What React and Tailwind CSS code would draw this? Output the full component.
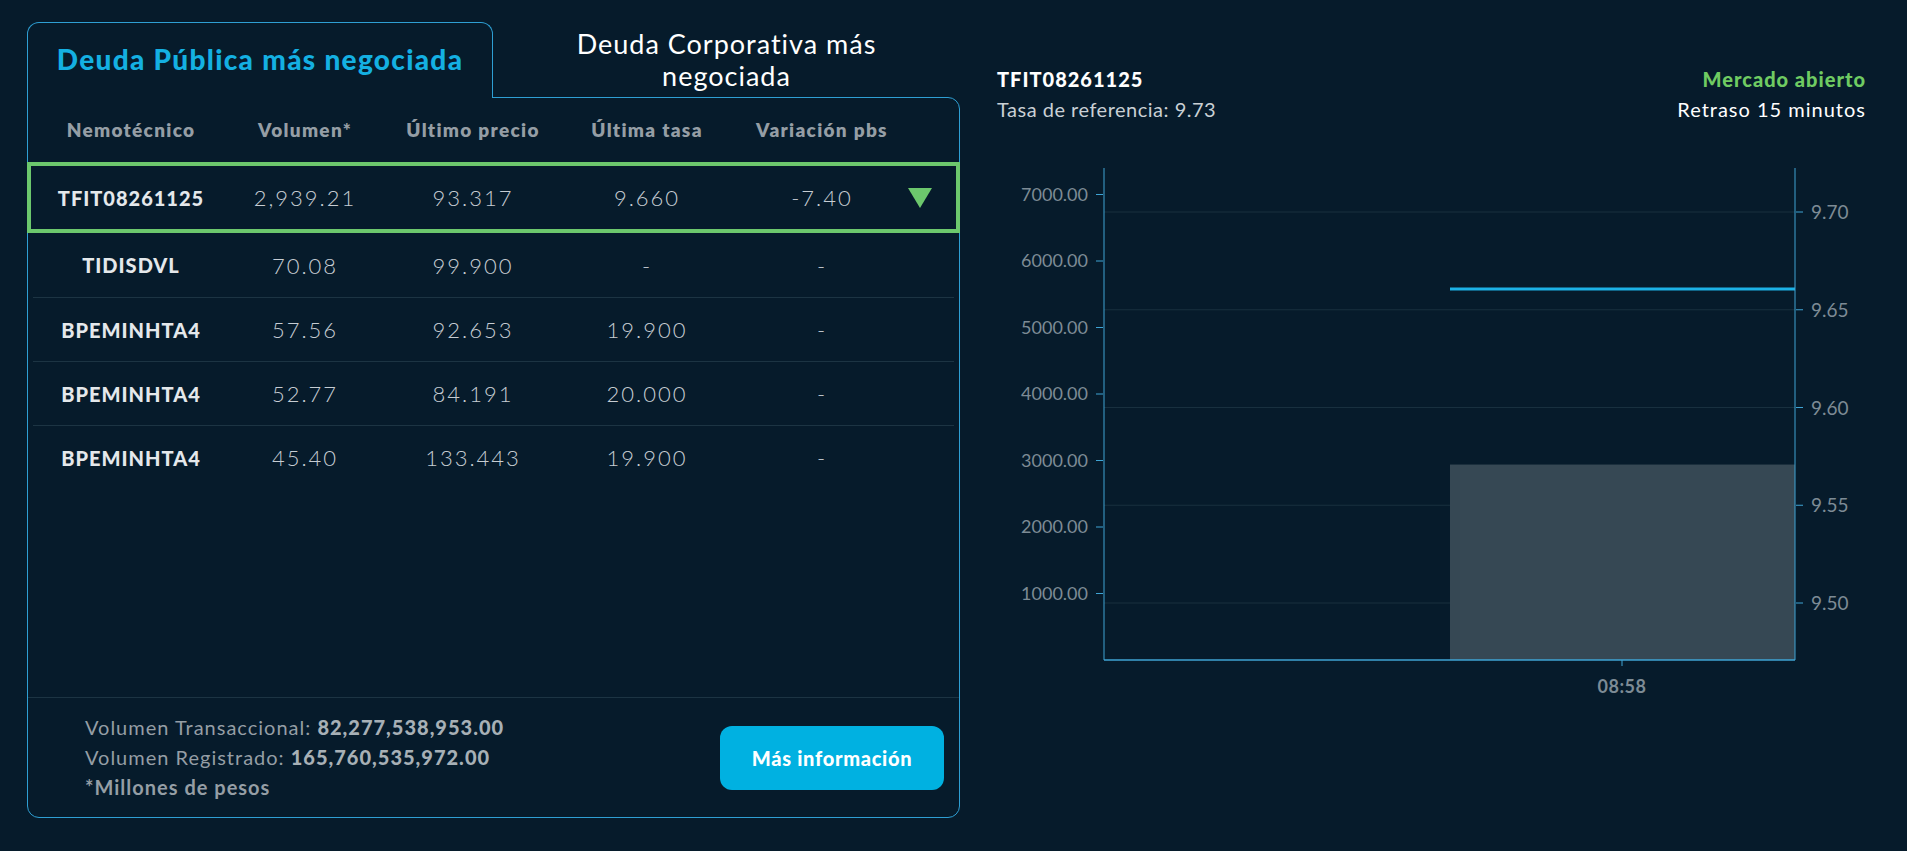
import React from "react";

const rows = [
  { name: "TFIT08261125", vol: "2,939.21", price: "93.317", rate: "9.660", varPbs: "-7.40", active: true },
  { name: "TIDISDVL", vol: "70.08", price: "99.900", rate: "-", varPbs: "-" },
  { name: "BPEMINHTA4", vol: "57.56", price: "92.653", rate: "19.900", varPbs: "-" },
  { name: "BPEMINHTA4", vol: "52.77", price: "84.191", rate: "20.000", varPbs: "-" },
  { name: "BPEMINHTA4", vol: "45.40", price: "133.443", rate: "19.900", varPbs: "-" },
];

const leftTicks = [7000, 6000, 5000, 4000, 3000, 2000, 1000];
const rightTicks = ["9.70", "9.65", "9.60", "9.55", "9.50"];

const num = "text-center font-light text-[22px] tracking-[2px] text-[#c6cdd3]";

const Cells = ({ row }) => (
  <>
    <div className="w-[206px] text-center font-black text-[20px] tracking-[1px] text-[#e4e8eb]">{row.name}</div>
    <div className={`w-[142px] ${num}`}>{row.vol}</div>
    <div className={`w-[194px] ${num}`}>{row.price}</div>
    <div className={`w-[154px] ${num}`}>{row.rate}</div>
    <div className={`w-[184px] pl-[12px] ${num}`}>{row.varPbs}</div>
  </>
);

const Chart = () => {
  // svg origin sits at page (997, 150)
  const yL = (v) => 510 - v * 0.0665;
  return (
    <svg width="869" height="560" className="block" style={{ fontFamily: "Lato, sans-serif" }}>
      {rightTicks.map((t, i) => {
        const y = 62 + i * 97.75;
        return (
          <g key={t}>
            <line x1="107" x2="798" y1={y} y2={y} stroke="#18303f" strokeWidth="1" />
            <line x1="799" x2="806" y1={y} y2={y} stroke="#3fa4d4" strokeWidth="1" />
            <text x="814" y={y + 7} fill="#7d8b95" fontSize="19">{t}</text>
          </g>
        );
      })}
      {leftTicks.map((v) => (
        <g key={v}>
          <line x1="99" x2="106" y1={yL(v)} y2={yL(v)} stroke="#3fa4d4" strokeWidth="1" />
          <text x="91" y={yL(v) + 6} fill="#7d8b95" fontSize="18" textAnchor="end">
            {v.toFixed(2)}
          </text>
        </g>
      ))}
      <rect x="453" y={yL(2939.21)} width="345" height={510 - yL(2939.21)} fill="#364854" />
      <line x1="453" x2="798" y1="139" y2="139" stroke="#1cb2e6" strokeWidth="3" />
      <line x1="107" x2="107" y1="18" y2="510" stroke="#3fa4d4" strokeWidth="1" />
      <line x1="798" x2="798" y1="18" y2="510" stroke="#3fa4d4" strokeWidth="1" />
      <line x1="107" x2="798" y1="510" y2="510" stroke="#3fa4d4" strokeWidth="1.5" />
      <line x1="625" x2="625" y1="510" y2="516" stroke="#3fa4d4" strokeWidth="1" />
      <text x="625" y="543" fill="#7d8b95" fontSize="18" fontWeight="700" letterSpacing="0.5" textAnchor="middle">08:58</text>
    </svg>
  );
};

const App = () => {
  return (
    <div className="min-h-screen bg-[#061b2b] flex pt-[22px] pl-[27px]" style={{ fontFamily: "Lato, 'Open Sans', sans-serif" }}>
      {/* Left panel */}
      <div className="w-[933px] flex flex-col">
        <div className="flex h-[75px]">
          <div className="relative z-10 -mb-px h-[76px] w-[466px] bg-[#061b2b] border-t border-l border-r border-[#2e9fd3] rounded-t-[12px] flex items-center justify-center">
            <span className="text-[28px] font-black tracking-[1.3px] text-[#14b0e2] pb-[3px]">Deuda Pública más negociada</span>
          </div>
          <div className="flex-1 flex items-center justify-center text-center text-[27px] tracking-[1px] leading-[32px] text-white">
            Deuda Corporativa más
            <br />
            negociada
          </div>
        </div>

        <div className="h-[721px] border border-[#2e9fd3] rounded-[12px] rounded-tl-none flex flex-col">
          <div className="flex items-center h-[64px] font-extrabold text-[19px] tracking-[1.3px] text-[#959ea5]">
            <div className="w-[206px] text-center">Nemotécnico</div>
            <div className="w-[142px] text-center">Volumen*</div>
            <div className="w-[194px] text-center">Último precio</div>
            <div className="w-[154px] text-center">Última tasa</div>
            <div className="w-[184px] pl-[12px] text-center">Variación pbs</div>
          </div>

          {rows.map((row, i) => (
            <React.Fragment key={i}>
              {i > 1 && <div className="h-px mx-[5px] bg-[#1c3443]" />}
              {row.active ? (
                <div className="flex items-center h-[71px] border-4 border-[#6cc86d] -mx-px">
                  <div className="flex items-center -ml-[3px]">
                    <Cells row={row} />
                  </div>
                  <svg width="24" height="20" viewBox="0 0 24 20">
                    <polygon points="0,0 24,0 12,20" fill="#6cc86d" />
                  </svg>
                </div>
              ) : (
                <div className={`flex items-center ${i === 1 ? "h-[64px]" : "h-[63px]"}`}>
                  <Cells row={row} />
                </div>
              )}
            </React.Fragment>
          ))}

          <div className="flex-1" />

          <div className="h-[120px] border-t border-[#1c3443] flex justify-between">
            <div className="pl-[57px] pt-[14px] text-[20px] tracking-[1px] leading-[30px]">
              <div className="text-[#959ea5]">
                Volumen Transaccional: <span className="font-black text-[#a7b0b6]">82,277,538,953.00</span>
              </div>
              <div className="text-[#959ea5]">
                Volumen Registrado: <span className="font-black text-[#a7b0b6]">165,760,535,972.00</span>
              </div>
              <div className="font-bold text-[#959ea5]">*Millones de pesos</div>
            </div>
            <button className="mt-[28px] mr-[15px] w-[224px] h-[64px] rounded-[12px] bg-[#00b1e1] text-white font-black text-[20px] tracking-[0.7px]">
              Más información
            </button>
          </div>
        </div>
      </div>

      {/* Right panel */}
      <div className="ml-[37px] w-[869px] pt-[42px]">
        <div className="flex justify-between text-[20px] leading-[30px]">
          <div>
            <div className="font-black tracking-[1px] text-white">TFIT08261125</div>
            <div className="tracking-[0.5px] text-[#c9d0d5]">Tasa de referencia: 9.73</div>
          </div>
          <div className="text-right">
            <div className="font-black tracking-[1px] text-[#6fcb62]">Mercado abierto</div>
            <div className="tracking-[1px] text-white">Retraso 15 minutos</div>
          </div>
        </div>
        <div className="mt-[26px]">
          <Chart />
        </div>
      </div>
    </div>
  );
};

export default App;
